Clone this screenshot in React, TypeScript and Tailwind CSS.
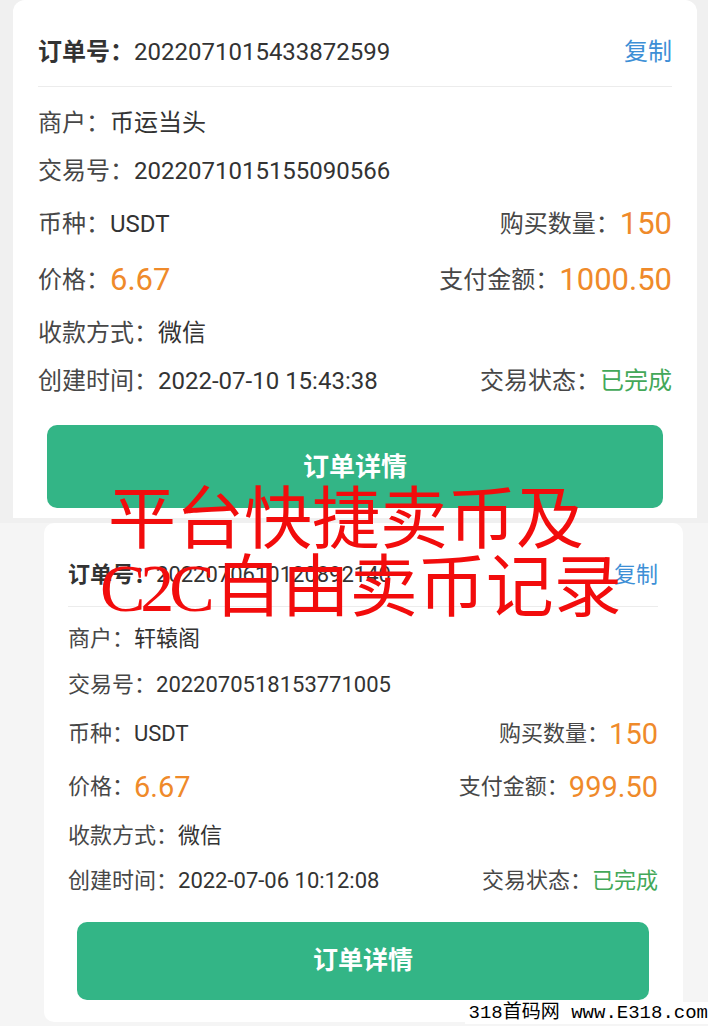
import React from 'react';

// ── Data ────────────────────────────────────────────────────────────────────

type Order = {
  orderNo: string;
  merchant: string;
  tradeNo: string;
  coin: string;
  qty: string;
  price: string;
  amount: string;
  payWay: string;
  createdAt: string;
  status: string;
};

const orders: Order[] = [
  {
    orderNo: '2022071015433872599',
    merchant: '币运当头',
    tradeNo: '2022071015155090566',
    coin: 'USDT',
    qty: '150',
    price: '6.67',
    amount: '1000.50',
    payWay: '微信',
    createdAt: '2022-07-10 15:43:38',
    status: '已完成',
  },
  {
    orderNo: '2022070610120892140',
    merchant: '轩辕阁',
    tradeNo: '2022070518153771005',
    coin: 'USDT',
    qty: '150',
    price: '6.67',
    amount: '999.50',
    payWay: '微信',
    createdAt: '2022-07-06 10:12:08',
    status: '已完成',
  },
];

const FONT = "font-['Roboto','Noto_Sans_CJK_SC',sans-serif]";

// sizes differ a bit between the two screenshots
type Scale = {
  text: string;
  big: string;
  head: string;
  rows: string[];
  btn: string;
};

const big: Scale = {
  text: 'text-[24px] leading-[34px]',
  big: 'text-[31px] leading-[34px]',
  head: 'pt-[35px] pb-[17px]',
  rows: ['mt-[13px] h-[46px]', 'h-[50px]', 'h-[55px]', 'h-[58px]', 'h-[48px]', 'h-[48px]'],
  btn: 'mt-[20px] h-[83px] text-[26px]',
};

const small: Scale = {
  text: 'text-[22px] leading-[32px]',
  big: 'text-[29px] leading-[32px]',
  head: 'pt-[36px] pb-[15px]',
  rows: ['mt-[9px] h-[45px]', 'h-[47px]', 'h-[52px]', 'h-[53px]', 'h-[45px]', 'h-[45px]'],
  btn: 'mt-[19px] h-[78px] text-[25px]',
};

// ── Card ────────────────────────────────────────────────────────────────────

function OrderCard({ o, s }: { o: Order; s: Scale }) {
  const label = 'text-[#474747]';
  const val = 'text-[#333]';
  const orange = `${s.big} text-[#ef8a2a]`;

  return (
    <div className={`${FONT} ${s.text}`}>
      {/* header */}
      <div className={`flex items-center justify-between border-b border-[#ececec] ${s.head}`}>
        <div className="flex items-center">
          <span className="font-bold text-[#333]">订单号：</span>
          <span className={val}>{o.orderNo}</span>
        </div>
        <span className="text-[#3d8fd6]">复制</span>
      </div>

      <div className={`flex items-center ${s.rows[0]}`}>
        <span className={label}>商户：</span>
        <span className={val}>{o.merchant}</span>
      </div>
      <div className={`flex items-center ${s.rows[1]}`}>
        <span className={label}>交易号：</span>
        <span className={val}>{o.tradeNo}</span>
      </div>
      <div className={`flex items-center justify-between ${s.rows[2]}`}>
        <div>
          <span className={label}>币种：</span>
          <span className={val}>{o.coin}</span>
        </div>
        <div className="flex items-center">
          <span className={label}>购买数量：</span>
          <span className={orange}>{o.qty}</span>
        </div>
      </div>
      <div className={`flex items-center justify-between ${s.rows[3]}`}>
        <div className="flex items-center">
          <span className={label}>价格：</span>
          <span className={orange}>{o.price}</span>
        </div>
        <div className="flex items-center">
          <span className={label}>支付金额：</span>
          <span className={orange}>{o.amount}</span>
        </div>
      </div>
      <div className={`flex items-center ${s.rows[4]}`}>
        <span className={label}>收款方式：</span>
        <span className={val}>{o.payWay}</span>
      </div>
      <div className={`flex items-center justify-between ${s.rows[5]}`}>
        <div>
          <span className={label}>创建时间：</span>
          <span className={val}>{o.createdAt}</span>
        </div>
        <div>
          <span className={label}>交易状态：</span>
          <span className="text-[#43a859]">{o.status}</span>
        </div>
      </div>

      <div
        className={`mx-[9px] flex items-center justify-center rounded-[10px] bg-[#33b586] font-bold text-white ${s.btn}`}
      >
        订单详情
      </div>
    </div>
  );
}

// ── Page ────────────────────────────────────────────────────────────────────

export default function App() {
  return (
    <div className="relative h-[1026px] w-[708px] overflow-hidden bg-[#f0f0f0]">
      {/* first screenshot */}
      <div className="pl-[13px] pr-[11px]">
        <div className="h-[518px] rounded-t-[12px] bg-white px-[25px]">
          <OrderCard o={orders[0]} s={big} />
        </div>
      </div>

      {/* second screenshot */}
      <div className="mt-[5px] h-[503px] bg-[#f5f5f5] pl-[44px] pr-[25px]">
        <div className="h-[499px] rounded-[10px] bg-white pl-[24px] pr-[25px]">
          <OrderCard o={orders[1]} s={small} />
        </div>
      </div>

      {/* red caption over both */}
      <div className="absolute left-[100px] top-[486px] font-['Liberation_Serif','Noto_Sans_CJK_SC',serif] text-[68px] leading-[68px] text-[#f20c0c]">
        <div className="pl-[8px]">平台快捷卖币及</div>
        <div>
          <span className="tracking-[-5px]">C2C</span>
          <span className="pl-[4px]">自由卖币记录</span>
        </div>
      </div>

      {/* watermark */}
      <div className="absolute bottom-[2px] right-0 bg-white pl-[4px] font-['Liberation_Mono','Noto_Sans_CJK_SC',monospace] text-[19px] leading-[22px] text-black">
        318首码网 www.E318.com
      </div>
    </div>
  );
}
